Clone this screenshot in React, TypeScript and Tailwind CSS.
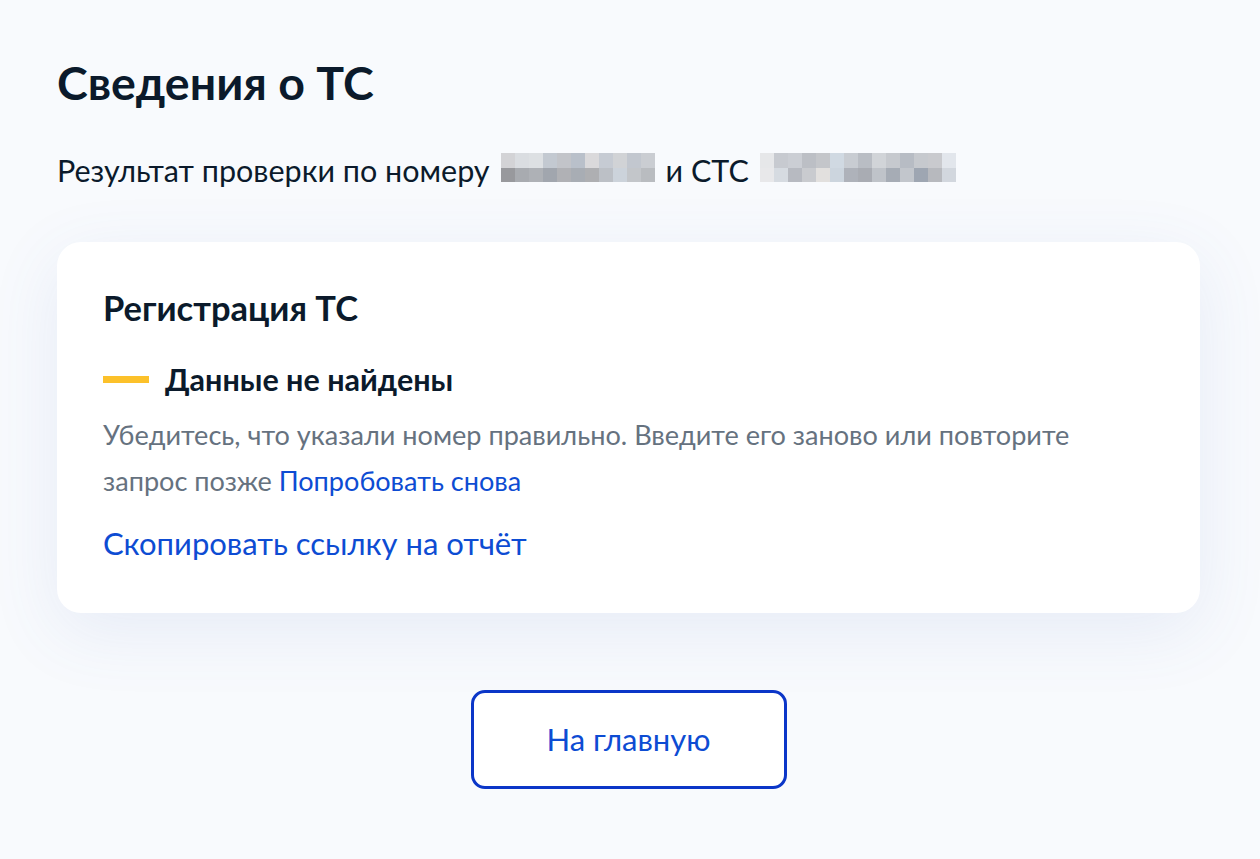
import React from 'react'

const font = { fontFamily: 'Lato, "Noto Sans", sans-serif' }

// pixelated placeholder for the hidden number
function Blurred({ cells }: { cells: string[][] }) {
    return (
        <span className="inline-block align-baseline mx-[11px]">
            {cells.map((row, r) => (
                <span key={r} className="flex">
                    {row.map((c, i) => (
                        <span key={i} className="block w-[14px] h-[14.5px]" style={{ background: c }} />
                    ))}
                </span>
            ))}
        </span>
    )
}

const numberCells = [
    ['#d3d3d6', '#dadde1', '#dde0e3', '#c3c9d1', '#c2c4c9', '#b9c0ca', '#dad9db', '#c6cbd3', '#d1d3d6', '#c2c7cf', '#cacdd2'],
    ['#98999d', '#a8abb0', '#aeb1b6', '#a1a6ae', '#b0b1b5', '#a8adb4', '#aeafb2', '#bcc0c6', '#ccd3db', '#c3c6ca', '#b9bcc0'],
]

const stsCells = [
    ['#e6e7e9', '#c7cad0', '#cbced4', '#bcbfc5', '#c4c6ca', '#d0d9e2', '#c8ccd2', '#b9bdc4', '#d1d4d8', '#c6c9ce', '#b7bcc4', '#c6c9ce', '#c9cace', '#e2e6ec'],
    ['#e8e8ea', '#d6dbe1', '#b7bac1', '#c9cbcf', '#e2e0de', '#ccd5de', '#aeb2ba', '#a9acb3', '#bfc3c9', '#a6acb5', '#c2c6cc', '#9ea6b2', '#b7b9be', '#d2d7de'],
]

export default function App() {
    return (
        <div className="min-h-[859px] w-full bg-[#f8fafd] text-[#0b1a2b]" style={font}>
            <div className="px-[57px] pt-[50px] w-[1257px]">
                <h1 className="text-[46.5px] leading-[64px] font-bold">Сведения о ТС</h1>

                <p className="mt-[36px] text-[30.5px] leading-[40px]">
                    Результат проверки по номеру
                    <Blurred cells={numberCells} />
                    и СТС
                    <Blurred cells={stsCells} />
                </p>

                <div className="mt-[52px] bg-white rounded-[24px] shadow-[0_18px_70px_rgba(80,110,190,0.10)] px-[46px] pt-[44px] pb-[49px]">
                    <h2 className="text-[34.5px] leading-[44px] font-bold">Регистрация ТС</h2>

                    <div className="mt-[29px] flex items-center gap-[16px]">
                        <span className="block w-[46px] h-[7px] bg-[#fcc12a]" />
                        <span className="text-[30.5px] leading-[40px] font-bold">Данные не найдены</span>
                    </div>

                    <p className="mt-[13px] text-[27.1px] leading-[46px] text-[#66727f] max-w-[1000px]">
                        Убедитесь, что указали номер правильно. Введите его заново или повторите запрос позже{' '}
                        <a className="text-[#0d4cd3]">Попробовать снова</a>
                    </p>

                    <a className="mt-[18px] block text-[31px] leading-[42px] text-[#0d4cd3]">Скопировать ссылку на отчёт</a>
                </div>

                <div className="mt-[77px] flex justify-center">
                    <button className="w-[316px] h-[99px] rounded-[14px] border-[3px] border-[#0b36c8] bg-white text-[31px] text-[#0d4cd3]" style={font}>
                        На главную
                    </button>
                </div>
            </div>
        </div>
    )
}
